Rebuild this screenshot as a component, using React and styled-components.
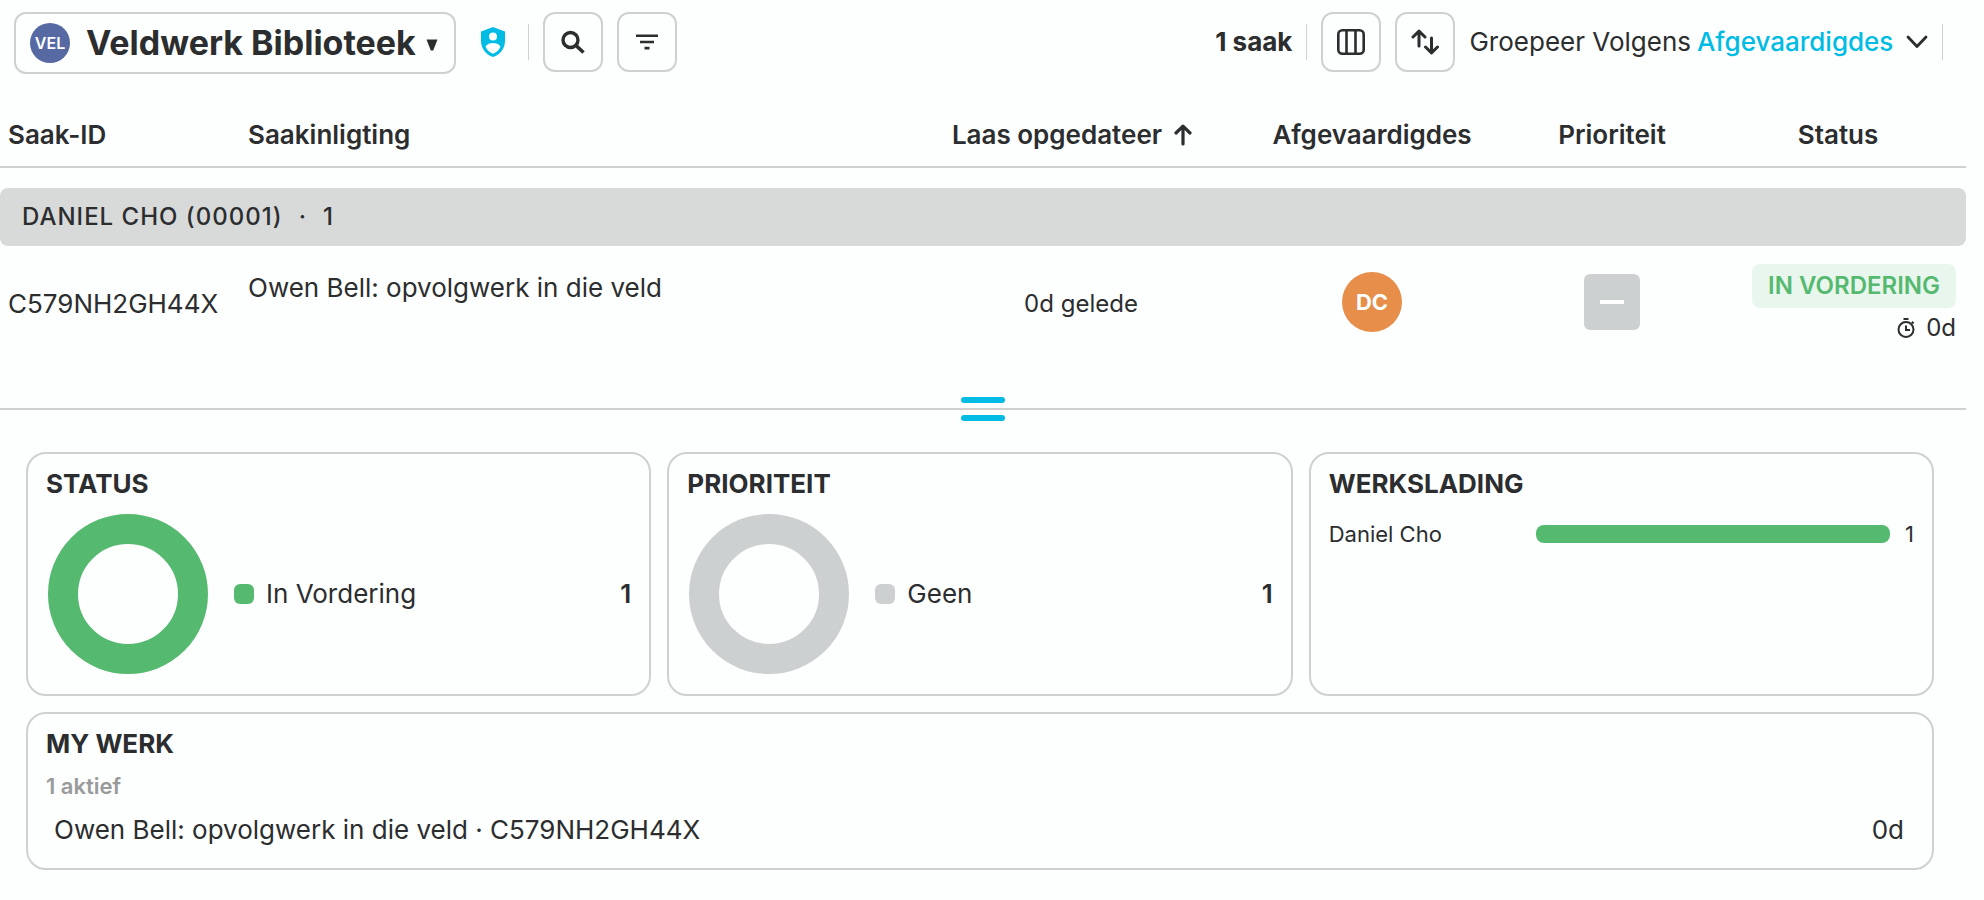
import React from "react";
import styled, { createGlobalStyle } from "styled-components";

const cases = [
  {
    id: "C579NH2GH44X",
    title: "Owen Bell: opvolgwerk in die veld",
    updated: "0d gelede",
    assignee: "DC",
    status: "In Vordering",
    age: "0d",
  },
];

const workload = [{ name: "Daniel Cho", count: 1 }];

// ICONS ------------------------------------
const ShieldIcon = () => (
  <svg width="26" height="30" viewBox="0 0 26 30" fill="none">
    <path d="M13 0 25 4.5V14C25 21.5 20 27.8 13 30 6 27.8 1 21.5 1 14V4.5Z" fill="#00bce4" />
    <circle cx="13" cy="9.5" r="4" fill="#fdfefe" />
    <path d="M5.5 19.5C7 17 10 16 13 16s6 1 7.5 3.5C19 23 16.5 25.5 13 26.8 9.5 25.5 7 23 5.5 19.5Z" fill="#fdfefe" />
  </svg>
);

const SearchIcon = () => (
  <svg width="24" height="24" viewBox="0 0 24 24" fill="none" stroke="#2b2d2e">
    <circle cx="9.5" cy="10" r="7.5" strokeWidth="3.4" />
    <path d="m15 15.5 7.5 7" strokeWidth="3.6" />
  </svg>
);

const FilterIcon = () => (
  <svg width="22" height="16" viewBox="0 0 22 16" fill="#2b2d2e">
    <path d="M0 .5h22v2.6H0zM4 6.7h14v2.6H4zM8.500 12.8h5v2.6h-5z" />
  </svg>
);

const ColumnsIcon = () => (
  <svg width="28" height="26" viewBox="0 0 28 26" fill="none" stroke="#2b2d2e" strokeWidth="2.6">
    <rect x="1.3" y="1.3" width="25.4" height="23.4" rx="4" />
    <path d="M9.5 1.5v23M18.5 1.5v23" />
  </svg>
);

const SortIcon = () => (
  <svg width="28" height="26" viewBox="0 0 28 26" fill="none" stroke="#2b2d2e" strokeWidth="3" strokeLinecap="round" strokeLinejoin="round">
    <path d="M8 17V2.5M2 8l6-5.8L14 8" />
    <path d="M20.5 9v14.500M14.5 18l6 5.8 6-5.8" />
  </svg>
);

const ArrowUpIcon = () => (
  <svg width="18" height="22" viewBox="0 0 18 22" fill="none" stroke="#2b2d2e" strokeWidth="3.2" strokeLinecap="round" strokeLinejoin="round">
    <path d="M9 20V2.500M2 9l7-6.800 7 6.800" />
  </svg>
);

const ChevronIcon = () => (
  <svg width="22" height="14" viewBox="0 0 22 14" fill="none" stroke="#2b2d2e" strokeWidth="2.8" strokeLinecap="round" strokeLinejoin="round">
    <path d="m2 2 9 9.5L20 2" />
  </svg>
);

const CaretIcon = () => (
  <svg width="12" height="16" viewBox="0 0 12 16" fill="#2b2d2e">
    <path d="M.5 4.500h11L7.200 15.500H4.800z" />
  </svg>
);

const TimerIcon = () => (
  <svg width="20" height="20" viewBox="0 0 20 20" fill="none" stroke="#2b2d2e" strokeWidth="2">
    <circle cx="10" cy="11.5" r="7.5" />
    <path d="M7.500 1h5M10 7.500V12h4M15.800 3.800l1.800 1.600" />
  </svg>
);

const Donut = ({ color }) => (
  <svg width="160" height="160" viewBox="0 0 160 160">
    <circle cx="80" cy="80" r="65" fill="none" stroke={color} strokeWidth="30" />
  </svg>
);

function SummaryCard({ title, label, count, color }) {
  return (
    <Card>
      <CardTitle>{title}</CardTitle>
      <ChartRow>
        <Donut color={color} />
        <Legend>
          <Swatch $color={color} />
          <span>{label}</span>
          <strong>{count}</strong>
        </Legend>
      </ChartRow>
    </Card>
  );
}

function App() {
  return (
    <Page>
      <GlobalStyle />

      {/* TOOLBAR ------------------------- */}
      <Toolbar>
        <WorkspaceButton type="button">
          <Avatar $size={40} $font={16} $color="#5769a3">VEL</Avatar>
          <WorkspaceName>Veldwerk Biblioteek</WorkspaceName>
          <CaretIcon />
        </WorkspaceButton>
        <ShieldLink href="#toegang" aria-label="Toegang">
          <ShieldIcon />
        </ShieldLink>
        <Divider />
        <IconButton type="button" aria-label="Soek">
          <SearchIcon />
        </IconButton>
        <IconButton type="button" aria-label="Filter">
          <FilterIcon />
        </IconButton>

        <CaseCount>1 saak</CaseCount>
        <Divider />
        <IconButton type="button" aria-label="Kolomme">
          <ColumnsIcon />
        </IconButton>
        <IconButton type="button" aria-label="Sorteer">
          <SortIcon />
        </IconButton>
        <GroupBy>
          <label htmlFor="group-by">Groepeer Volgens</label>
          <GroupSelect id="group-by" defaultValue="assignees">
            <option value="assignees">Afgevaardigdes</option>
          </GroupSelect>
          <ChevronIcon />
        </GroupBy>
        <Divider />
      </Toolbar>

      {/* CASES ------------------------- */}
      <CaseTable>
        <colgroup>
          <Col $width={240} />
          <col />
          <Col $width={296} />
          <Col $width={284} />
          <Col $width={196} />
          <Col $width={256} />
        </colgroup>
        <thead>
          <tr>
            <HeadCell>Saak-ID</HeadCell>
            <HeadCell>Saakinligting</HeadCell>
            <HeadCell $center>
              <SortButton type="button">
                Laas opgedateer
                <ArrowUpIcon />
              </SortButton>
            </HeadCell>
            <HeadCell $center>Afgevaardigdes</HeadCell>
            <HeadCell $center>Prioriteit</HeadCell>
            <HeadCell $center>Status</HeadCell>
          </tr>
        </thead>
        <tbody>
          <tr>
            <GroupCell colSpan={6}>
              <GroupBand>
                <span>Daniel Cho (00001)</span>
                <span>·</span>
                <span>1</span>
              </GroupBand>
            </GroupCell>
          </tr>
          {cases.map((item) => (
            <tr key={item.id}>
              <Cell>{item.id}</Cell>
              <Cell $top>{item.title}</Cell>
              <Cell $center $small>{item.updated}</Cell>
              <MediaCell>
                <Avatar $size={60} $font={22} $color="#e68e4a" $bold>{item.assignee}</Avatar>
              </MediaCell>
              <MediaCell>
                <PriorityBox>
                  <PriorityDash />
                </PriorityBox>
              </MediaCell>
              <Cell $small>
                <StatusStack>
                  <StatusBadge>{item.status}</StatusBadge>
                  <Age>
                    <TimerIcon />
                    {item.age}
                  </Age>
                </StatusStack>
              </Cell>
            </tr>
          ))}
        </tbody>
      </CaseTable>

      <Splitter role="separator">
        <SplitterHandle>
          <HandleBar />
          <HandleBar />
        </SplitterHandle>
      </Splitter>

      {/* SUMMARY ------------------------- */}
      <Dashboard>
        <SummaryCard title="Status" label="In Vordering" count={1} color="#56b970" />
        <SummaryCard title="Prioriteit" label="Geen" count={1} color="#cdd0d1" />
        <Card>
          <CardTitle>Werkslading</CardTitle>
          {workload.map((person) => (
            <WorkloadRow key={person.name}>
              <span>{person.name}</span>
              <WorkloadBar />
              <span>{person.count}</span>
            </WorkloadRow>
          ))}
        </Card>
        <Card $wide>
          <CardTitle>My Werk</CardTitle>
          <ActiveCount>1 aktief</ActiveCount>
          {cases.map((item) => (
            <WorkRow key={item.id}>
              <span>
                {item.title} · {item.id}
              </span>
              <span>{item.age}</span>
            </WorkRow>
          ))}
        </Card>
      </Dashboard>
    </Page>
  );
}

const GlobalStyle = createGlobalStyle`
  * {
    box-sizing: border-box;
  }
  body {
    margin: 0;
    background: #fdfefe;
    color: #2b2d2e;
    font-family: Inter, "Liberation Sans", sans-serif;
    font-size: 26px;
    line-height: 32px;
  }
  button, select {
    font: inherit;
    color: inherit;
    background: transparent;
    border: none;
    margin: 0;
    padding: 0;
    cursor: pointer;
  }
  svg {
    display: block;
    flex: none;
  }
`;

const Page = styled.main`
  padding-right: 18px;
`;

const Toolbar = styled.header`
  display: flex;
  align-items: flex-start;
  gap: 14px;
  padding: 12px 23px 0 14px;
`;

const WorkspaceButton = styled.button`
  display: flex;
  align-items: center;
  height: 62px;
  padding: 0 16px 0 14px;
  border: 2px solid #cfd1d1;
  border-radius: 12px;
`;

const WorkspaceName = styled.span`
  margin: 0 10px 0 16px;
  font-size: 34px;
  font-weight: 700;
`;

const Avatar = styled.span`
  display: flex;
  align-items: center;
  justify-content: center;
  width: ${({ $size }) => $size}px;
  height: ${({ $size }) => $size}px;
  border-radius: 50%;
  background: ${({ $color }) => $color};
  color: #fff;
  font-size: ${({ $font }) => $font}px;
  font-weight: ${({ $bold }) => ($bold ? 700 : 600)};
`;

const ShieldLink = styled.a`
  display: flex;
  align-items: center;
  height: 60px;
  margin: 0 8px 0 10px;
`;

const Divider = styled.span`
  width: 1px;
  height: 36px;
  margin-top: 12px;
  background: #cfd1d1;
`;

const IconButton = styled.button`
  display: flex;
  align-items: center;
  justify-content: center;
  width: 60px;
  height: 60px;
  border: 2px solid #cfd1d1;
  border-radius: 12px;
`;

const CaseCount = styled.strong`
  margin-left: auto;
  line-height: 60px;
  font-weight: 700;
`;

const GroupBy = styled.div`
  display: flex;
  align-items: center;
  gap: 6px;
  height: 60px;
`;

const GroupSelect = styled.select`
  appearance: none;
  margin-right: 6px;
  color: #00bce4;
  font-weight: 500;
`;

const CaseTable = styled.table`
  width: 100%;
  margin-top: 26px;
  table-layout: fixed;
  border-collapse: separate;
  border-spacing: 0;
`;

const Col = styled.col`
  width: ${({ $width }) => $width}px;
`;

const HeadCell = styled.th`
  height: 68px;
  padding: 4px 8px 0;
  border-bottom: 2px solid #cfd1d1;
  font-weight: 600;
  text-align: ${({ $center }) => ($center ? "center" : "left")};
`;

const SortButton = styled.button`
  display: inline-flex;
  align-items: center;
  gap: 12px;
  padding-right: 20px;
  font-weight: 600;
  vertical-align: top;
`;

const GroupCell = styled.td`
  padding: 20px 0 0;
`;

const GroupBand = styled.div`
  display: flex;
  align-items: center;
  gap: 16px;
  height: 58px;
  padding: 0 22px;
  border-radius: 8px;
  background: #d8dad9;
  font-size: 24px;
  font-weight: 500;
  letter-spacing: 1px;
  text-transform: uppercase;
`;

const Cell = styled.td`
  height: 114px;
  padding: ${({ $top }) => ($top ? "26px 8px 8px" : "10px 10px 8px 8px")};
  vertical-align: ${({ $top }) => ($top ? "top" : "middle")};
  font-size: ${({ $small }) => ($small ? 24 : 26)}px;
  text-align: ${({ $center }) => ($center ? "center" : "left")};
`;

const MediaCell = styled.td`
  padding: 6px 8px 8px;
  vertical-align: middle;

  > span {
    margin: 0 auto;
  }
`;

const PriorityBox = styled.span`
  display: flex;
  align-items: center;
  justify-content: center;
  width: 56px;
  height: 56px;
  border-radius: 6px;
  background: #cdd0d1;
`;

const PriorityDash = styled.span`
  width: 24px;
  height: 4px;
  background: #fff;
`;

const StatusStack = styled.div`
  display: flex;
  flex-direction: column;
  align-items: flex-end;
  gap: 4px;
`;

const StatusBadge = styled.span`
  padding: 6px 16px;
  border-radius: 8px;
  background: #e9f6ee;
  color: #56b970;
  font-weight: 600;
  text-transform: uppercase;
`;

const Age = styled.span`
  display: flex;
  align-items: center;
  gap: 10px;
`;

const Splitter = styled.div`
  display: flex;
  align-items: center;
  justify-content: center;
  height: 2px;
  margin-top: 48px;
  background: #cfd1d1;
`;

const SplitterHandle = styled.span`
  display: flex;
  flex-direction: column;
  gap: 12px;
`;

const HandleBar = styled.span`
  width: 44px;
  height: 6px;
  border-radius: 3px;
  background: #00bce4;
`;

const Dashboard = styled.section`
  display: grid;
  grid-template-columns: repeat(3, 1fr);
  gap: 16px;
  padding: 42px 32px 30px 26px;
`;

const Card = styled.article`
  min-height: ${({ $wide }) => ($wide ? 158 : 244)}px;
  padding: 14px 18px;
  border: 2px solid #cfd1d1;
  border-radius: 20px;
  grid-column: ${({ $wide }) => ($wide ? "1 / -1" : "auto")};
`;

const CardTitle = styled.h2`
  margin: 0;
  font-size: 26px;
  font-weight: 700;
  text-transform: uppercase;
`;

const ChartRow = styled.div`
  display: flex;
  align-items: center;
  gap: 26px;
  margin-top: 14px;
  padding-left: 2px;
`;

const Legend = styled.div`
  display: flex;
  flex: 1;
  align-items: center;
  gap: 12px;

  strong {
    margin-left: auto;
    font-weight: 600;
  }
`;

const Swatch = styled.span`
  width: 20px;
  height: 20px;
  border-radius: 6px;
  background: ${({ $color }) => $color};
`;

const WorkloadRow = styled.div`
  display: grid;
  grid-template-columns: 192px 1fr auto;
  align-items: center;
  gap: 15px;
  margin-top: 18px;
  font-size: 22px;
`;

const WorkloadBar = styled.span`
  height: 18px;
  border-radius: 8px;
  background: #56b970;
`;

const ActiveCount = styled.p`
  margin: 10px 0 12px;
  color: #999b9b;
  font-size: 22px;
  font-weight: 600;
`;

const WorkRow = styled.div`
  display: flex;
  justify-content: space-between;
  padding: 0 10px 0 8px;
`;

export default App;
